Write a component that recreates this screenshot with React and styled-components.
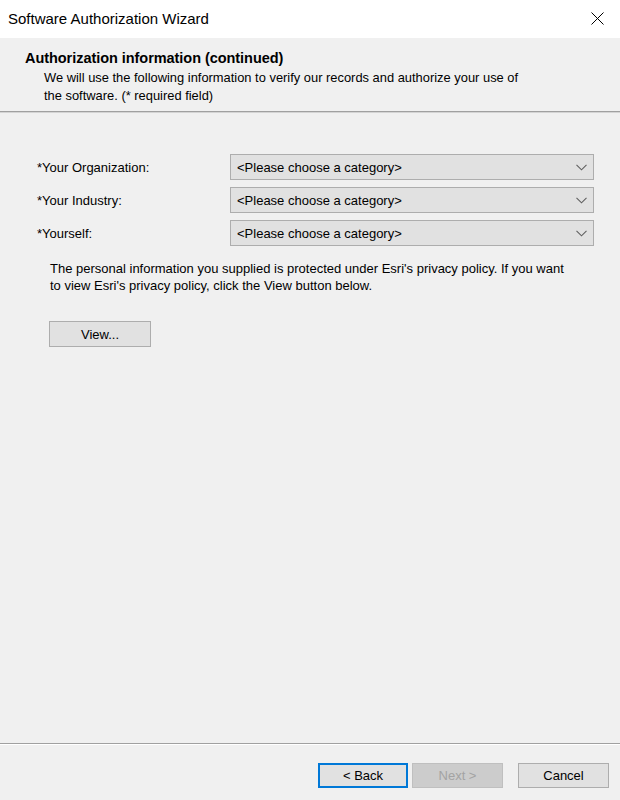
import React from "react";
import styled, { createGlobalStyle } from "styled-components";

const Global = createGlobalStyle`
  html, body { margin: 0; padding: 0; background: #f0f0f0; }
  body { font-family: "Liberation Sans", Arial, sans-serif; color: #000; }
  * { box-sizing: border-box; }
`;

const Window = styled.div`
  width: 620px;
  height: 800px;
  display: flex;
  flex-direction: column;
  background: #f0f0f0;
  overflow: hidden;
`;

const TitleBar = styled.div`
  height: 38px;
  flex: none;
  background: #fff;
  display: flex;
  align-items: center;
  justify-content: space-between;
  padding: 0 0 2px 8px;
`;

const TitleText = styled.span`
  font-size: 15px;
  color: #000;
`;

const CloseBox = styled.div`
  width: 46px;
  height: 34px;
  display: flex;
  align-items: center;
  justify-content: center;
`;

const Header = styled.div`
  flex: none;
  height: 74px;
  padding: 11px 0 0 25px;
  border-bottom: 1px solid #a0a0a0;
  box-shadow: 0 1px 0 #d4d4d4;
`;

const HeaderTitle = styled.div`
  font-size: 14.5px;
  font-weight: bold;
  line-height: 18px;
  letter-spacing: -0.05px;
  margin-bottom: 2px;
`;

const HeaderSub = styled.div`
  font-size: 12.9px;
  line-height: 18px;
  padding-left: 19px;
  width: 525px;
`;

const Content = styled.div`
  flex: 1;
  padding: 42px 26px 0 37px;
  display: flex;
  flex-direction: column;
`;

const Form = styled.div`
  display: flex;
  flex-direction: column;
  gap: 7px;
`;

const Row = styled.div`
  display: flex;
  align-items: center;
  height: 26px;
`;

const Label = styled.span`
  width: 193px;
  font-size: 13px;
`;

const Combo = styled.div`
  width: 364px;
  height: 26px;
  background: #e1e1e1;
  border: 1px solid #adadad;
  display: flex;
  align-items: center;
  justify-content: space-between;
  padding: 0 6px;
  font-size: 13px;
`;

const Note = styled.p`
  margin: 14px 0 0 13px;
  font-size: 13px;
  line-height: 17px;
  width: 530px;
`;

const Button = styled.button`
  font-family: "Liberation Sans", Arial, sans-serif;
  font-size: 13px;
  color: ${(p) => (p.disabled ? "#a3a3a3" : "#000")};
  background: ${(p) => (p.disabled ? "#cccccc" : "#e1e1e1")};
  border: ${(p) =>
    p.primary ? "2px solid #0078d7" : p.disabled ? "1px solid #bfbfbf" : "1px solid #adadad"};
  width: ${(p) => p.w || 91}px;
  height: ${(p) => p.h || 25}px;
  padding: 0;
  margin: 0;
  display: flex;
  align-items: center;
  justify-content: center;
`;

const ViewWrap = styled.div`
  margin: 27px 0 0 12px;
`;

const Footer = styled.div`
  flex: none;
  height: 57px;
  border-top: 1px solid #a0a0a0;
  box-shadow: inset 0 1px 0 #fff;
  display: flex;
  justify-content: flex-end;
  align-items: flex-start;
  padding: 19px 11px 0 0;
`;

const ButtonGroup = styled.div`
  display: flex;
  gap: 4px;
  margin-right: 15px;
`;

const Chevron = () => (
  <svg width="11" height="7" viewBox="0 0 11 7">
    <polyline points="0.5,0.8 5.5,5.8 10.5,0.8" fill="none" stroke="#606060" strokeWidth="1.1" />
  </svg>
);

const CloseIcon = () => (
  <svg width="13" height="13" viewBox="0 0 13 13">
    <path d="M0.5 0.5 L12.5 12.5 M12.5 0.5 L0.5 12.5" stroke="#000" strokeWidth="1" />
  </svg>
);

const fields = ["*Your Organization:", "*Your Industry:", "*Yourself:"];

export default function App() {
  return (
    <>
      <Global />
      <Window>
        <TitleBar>
          <TitleText>Software Authorization Wizard</TitleText>
          <CloseBox>
            <CloseIcon />
          </CloseBox>
        </TitleBar>
        <Header>
          <HeaderTitle>Authorization information (continued)</HeaderTitle>
          <HeaderSub>
            We will use the following information to verify our records and authorize your use of
            <br />
            the software. (* required field)
          </HeaderSub>
        </Header>
        <Content>
          <Form>
            {fields.map((f) => (
              <Row key={f}>
                <Label>{f}</Label>
                <Combo>
                  <span>&lt;Please choose a category&gt;</span>
                  <Chevron />
                </Combo>
              </Row>
            ))}
          </Form>
          <Note>
            The personal information you supplied is protected under Esri's privacy policy. If you want
            <br />
            to view Esri's privacy policy, click the View button below.
          </Note>
          <ViewWrap>
            <Button w={102} h={26}>View...</Button>
          </ViewWrap>
        </Content>
        <Footer>
          <ButtonGroup>
            <Button primary w={90}>&lt; Back</Button>
            <Button disabled>Next &gt;</Button>
          </ButtonGroup>
          <Button>Cancel</Button>
        </Footer>
      </Window>
    </>
  );
}
